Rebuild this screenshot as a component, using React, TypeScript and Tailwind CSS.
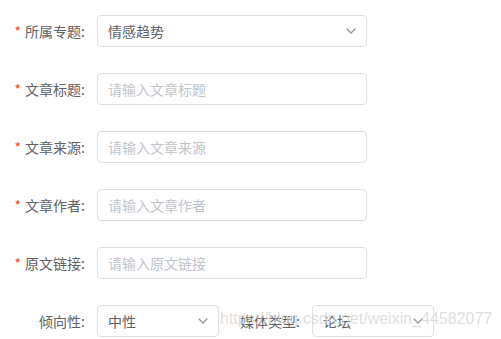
import React from 'react';

const font = { fontFamily: '"Noto Sans CJK SC", "Noto Sans", sans-serif' };

const Chevron: React.FC = () => (
  <svg width="10" height="6" viewBox="0 0 10 6" className="shrink-0">
    <path d="M1 1l4 4 4-4" fill="none" stroke="#909399" strokeWidth="1.3" strokeLinecap="round" strokeLinejoin="round" />
  </svg>
);

const Label: React.FC<{ text: string; required?: boolean; width?: string }> = ({ text, required, width = 'w-[97px]' }) => (
  <label className={`${width} shrink-0 pr-3 text-right text-[14px] text-[#606266] leading-8`}>
    {required && <span className="mr-1 text-[#f5461f]">*</span>}
    {text}
  </label>
);

const Select: React.FC<{ value: string; width: string }> = ({ value, width }) => (
  <div className={`${width} flex h-8 items-center justify-between rounded border border-[#dcdfe6] bg-white pl-[10px] pr-[10px] text-[14px] text-[#606266]`}>
    <span>{value}</span>
    <Chevron />
  </div>
);

const Input: React.FC<{ placeholder: string }> = ({ placeholder }) => (
  <div className="flex h-8 w-[270px] items-center rounded border border-[#dcdfe6] bg-white px-[10px] text-[14px] text-[#c0c4cc]">
    {placeholder}
  </div>
);

export default function App() {
  const fields = [
    { label: '文章标题:', placeholder: '请输入文章标题' },
    { label: '文章来源:', placeholder: '请输入文章来源' },
    { label: '文章作者:', placeholder: '请输入文章作者' },
    { label: '原文链接:', placeholder: '请输入原文链接' },
  ];

  return (
    <div className="relative h-[339px] w-[501px] overflow-hidden bg-white" style={font}>
      <div className="flex flex-col gap-[26px] pt-[15px]">
        <div className="flex items-center">
          <Label text="所属专题:" required />
          <Select value="情感趋势" width="w-[270px]" />
        </div>

        {fields.map(f => (
          <div key={f.label} className="flex items-center">
            <Label text={f.label} required />
            <Input placeholder={f.placeholder} />
          </div>
        ))}

        <div className="flex items-center">
          <Label text="倾向性:" />
          <Select value="中性" width="w-[122px]" />
          <Label text="媒体类型:" width="w-[93px]" />
          <Select value="论坛" width="w-[122px]" />
        </div>
      </div>

      {/* csdn watermark */}
      <div
        className="pointer-events-none absolute left-[220px] top-[309px] text-[16px] leading-5 text-[#d6d6d6]/80"
        style={{ fontFamily: '"Liberation Sans", Arial, sans-serif' }}
      >
        https://blog.csdn.net/weixin_44582077
      </div>
    </div>
  );
}
